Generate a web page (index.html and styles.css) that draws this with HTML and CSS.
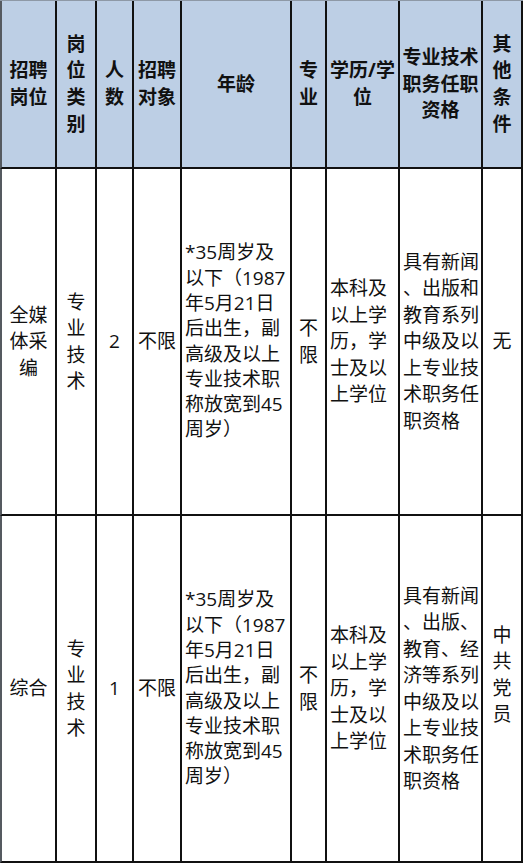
FILE: index.html
```html
<!DOCTYPE html>
<html lang="zh-CN">
<head>
<meta charset="utf-8">
<title>招聘岗位</title>
<link rel="stylesheet" href="styles.css">
</head>
<body>
<div class="sheet" role="table">
  <div class="c h first">招聘<br>岗位</div>
  <div class="c h">岗<br>位<br>类<br>别</div>
  <div class="c h">人<br>数</div>
  <div class="c h">招聘<br>对象</div>
  <div class="c h">年龄</div>
  <div class="c h">专<br>业</div>
  <div class="c h">学历/学<br>位</div>
  <div class="c h">专业技术<br>职务任职<br>资格</div>
  <div class="c h">其<br>他<br>条<br>件</div>

  <div class="c first">全媒<br>体采<br>编</div>
  <div class="c">专<br>业<br>技<br>术</div>
  <div class="c">2</div>
  <div class="c">不限</div>
  <div class="c left age">*35周岁及<br>以下（1987<br>年5月21日<br>后出生，副<br>高级及以上<br>专业技术职<br>称放宽到45<br>周岁）</div>
  <div class="c">不<br>限</div>
  <div class="c left">本科及<br>以上学<br>历，学<br>士及以<br>上学位</div>
  <div class="c left">具有新闻<br>、出版和<br>教育系列<br>中级及以<br>上专业技<br>术职务任<br>职资格</div>
  <div class="c">无</div>

  <div class="c first">综合</div>
  <div class="c">专<br>业<br>技<br>术</div>
  <div class="c">1</div>
  <div class="c">不限</div>
  <div class="c left age">*35周岁及<br>以下（1987<br>年5月21日<br>后出生，副<br>高级及以上<br>专业技术职<br>称放宽到45<br>周岁）</div>
  <div class="c">不<br>限</div>
  <div class="c left">本科及<br>以上学<br>历，学<br>士及以<br>上学位</div>
  <div class="c left">具有新闻<br>、出版、<br>教育、经<br>济等系列<br>中级及以<br>上专业技<br>术职务任<br>职资格</div>
  <div class="c raised">中<br>共<br>党<br>员</div>
</div>
</body>
</html>
```

FILE: styles.css
```css
html, body {
  margin: 0;
  padding: 0;
  background: #ffffff;
}

.sheet {
  display: grid;
  grid-template-columns: 57px 40px 37px 48px 110px 35px 73px 83px 40px;
  grid-template-rows: 168px 347px 347px;
  width: 523px;
  border-top: 1px solid #8e99a6;
  font-family: "Open Sans", "Noto Sans CJK SC", sans-serif;
  font-size: 19px;
  color: #111111;
}

.c {
  box-sizing: border-box;
  display: flex;
  align-items: center;
  justify-content: center;
  text-align: center;
  white-space: nowrap;
  line-height: 26.5px;
  border-right: 2px solid #111111;
  border-bottom: 2px solid #111111;
  background: #ffffff;
}

.first {
  border-left: 2px solid #555a60;
}

.h {
  background: #bdcfe5;
  font-weight: 700;
  line-height: 26.7px;
}

.left {
  justify-content: flex-start;
  text-align: left;
  padding-left: 3px;
}

.age {
  line-height: 25.3px;
}

.raised {
  padding-bottom: 28px;
}
```
